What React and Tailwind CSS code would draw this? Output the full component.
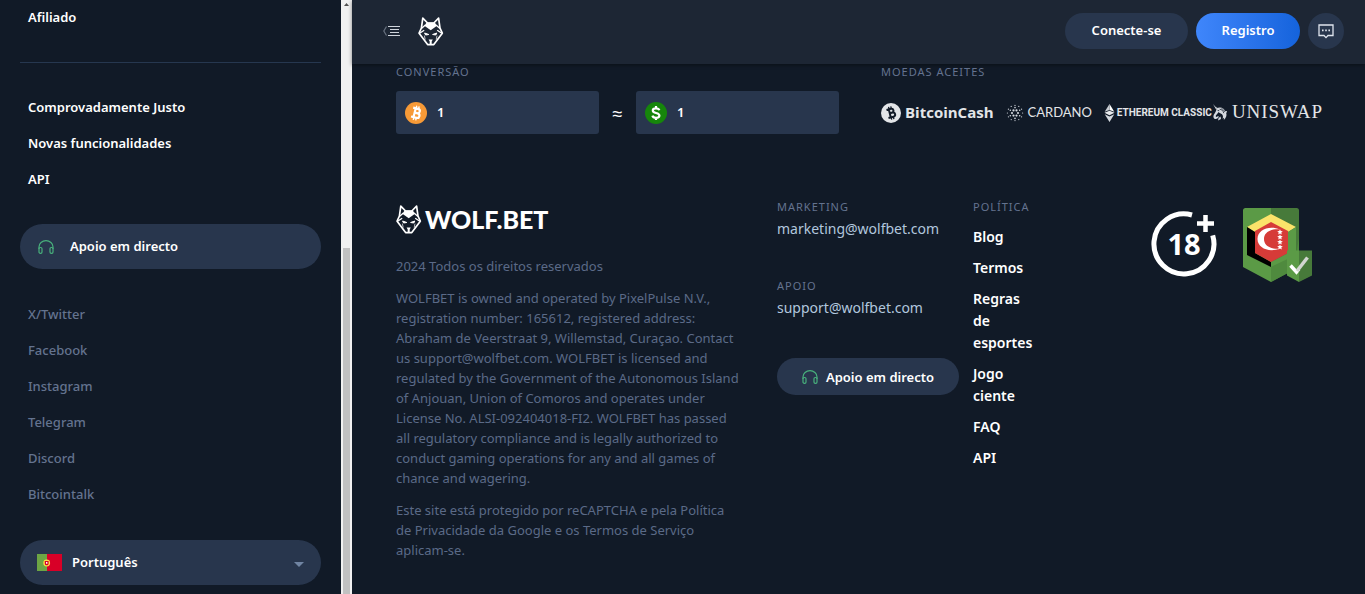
import React, { useState } from 'react';

const mainLinks = ['Comprovadamente Justo', 'Novas funcionalidades', 'API'];
const socialLinks = ['X/Twitter', 'Facebook', 'Instagram', 'Telegram', 'Discord', 'Bitcointalk'];
const policyLinks = ['Blog', 'Termos', 'Regras de esportes', 'Jogo ciente', 'FAQ', 'API'];

const WolfIcon = ({ className }) => (
  <svg viewBox="0 0 26 29" className={className} fill="none" stroke="#fff" strokeLinejoin="round" aria-hidden="true">
    <path d="M4.8 1.2 3.4 11 1.1 16.200 9.6 27.600h6.200l8.500-11.400L22 11 20.600 1.200 15.800 6H9.600Z" strokeWidth="1.7" />
    <path d="M8.600 5.600h8.200l2.200 3.200-6.300 4.400L6.400 8.800Z" fill="#fff" stroke="none" />
    <path d="M3.400 11.600 7.400 8M22 11.600 18 8M1.600 16.200l4.600-3M23.800 16.200l-4.600-3" strokeWidth="1.3" />
    <path d="m6.600 16 4.200 1.500-3.200.5ZM18.800 16l-4.200 1.500 3.200.5Z" fill="#fff" />
    <path d="M10.600 22.600h4.200l-1.100 1.800v3h-2v-3Z" fill="#fff" stroke="none" />
    <path d="m6.400 18.600.8 4M19 18.600l-.8 4" strokeWidth=".7" />
  </svg>
);

const HeadphonesIcon = () => (
  <svg viewBox="0 0 16 14" className="h-3.5 w-4 shrink-0" fill="none" stroke="#48b07c" strokeWidth="1.2" aria-hidden="true">
    <path d="M1 9V7a7 6.3 0 0 1 14 0v2" />
    <rect x="1" y="7.5" width="3" height="5.8" rx="1.3" />
    <rect x="12" y="7.5" width="3" height="5.8" rx="1.3" />
  </svg>
);

const MenuIcon = () => (
  <svg viewBox="0 0 17 12" className="h-3 w-[17px]" fill="none" aria-hidden="true">
    <path d="M3.500 1.500.8 6l2.700 4.500" stroke="#68717f" strokeWidth="1.2" />
    <path d="M5 1.500h12M7 4.500h9M7 7.500h9M5 10.500h12" stroke="#cfd4db" strokeWidth="1" />
  </svg>
);

const ChatIcon = () => (
  <svg viewBox="0 0 16 15" className="h-[15px] w-4" fill="none" stroke="#dfe5ee" strokeWidth="1.3" aria-hidden="true">
    <path d="M1 1h14v10.500h-5L8 13.600 6 11.500H1Z" />
    <path d="M4 6.400h1.600M7.200 6.400h1.600M10.400 6.400H12" strokeWidth="1.6" />
  </svg>
);

const BitcoinGlyph = ({ color }) => (
  <g fill="none" stroke={color} strokeWidth="2.2">
    <path d="M8.500 6.500h3.600a2.200 2.200 0 0 1 0 4.400H9.300M9.300 10.900h3.400a2.300 2.300 0 0 1 0 4.700H8.200M9.600 6.500v9M7 6.500h3M7 15.600h3" />
    <path d="M10 3.800v2.700M12.500 3.800v2.700M10 15.600v2.700M12.500 15.600v2.700" strokeWidth="1.4" />
  </g>
);

const BitcoinIcon = () => (
  <svg viewBox="0 0 22 22" className="h-[22px] w-[22px] shrink-0" aria-hidden="true">
    <circle cx="11" cy="11" r="11" fill="#f79a37" />
    <g transform="rotate(14 11 11)">
      <BitcoinGlyph color="#fff" />
    </g>
  </svg>
);

const DollarIcon = () => (
  <svg viewBox="0 0 22 22" className="h-[22px] w-[22px] shrink-0" aria-hidden="true">
    <circle cx="11" cy="11" r="11" fill="#16860b" />
    <path d="M14.300 8.200C13.900 6.900 12.700 6.300 11 6.300c-1.900 0-3.200.8-3.200 2.200 0 3.400 6.600 1.500 6.600 5 0 1.500-1.400 2.300-3.400 2.300-1.800 0-3.200-.7-3.600-2.200M11 4v2.300M11 15.800V18" fill="none" stroke="#fff" strokeWidth="2.2" />
  </svg>
);

const BitcoinCashIcon = () => (
  <svg viewBox="0 0 22 22" className="h-5 w-5" aria-hidden="true">
    <circle cx="11" cy="11" r="11" fill="#e3e5e8" />
    <g transform="rotate(-14 11 11)">
      <BitcoinGlyph color="#111a27" />
    </g>
  </svg>
);

const CardanoIcon = () => {
  const rings = [
    { r: 3, size: 1.1, step: 60, shift: 0 },
    { r: 5.4, size: 0.8, step: 60, shift: 30 },
    { r: 7.6, size: 0.6, step: 30, shift: 0 },
  ];
  return (
    <svg viewBox="-9 -9 18 18" className="h-[18px] w-[18px]" fill="#d5d9df" aria-hidden="true">
      {rings.map(({ r, size, step, shift }) =>
        Array.from({ length: 360 / step }, (_, i) => {
          const a = ((i * step + shift) * Math.PI) / 180;
          return <circle key={`${r}-${i}`} cx={r * Math.cos(a)} cy={r * Math.sin(a)} r={size} />;
        })
      )}
    </svg>
  );
};

const EthereumClassicIcon = () => (
  <svg viewBox="0 0 11 18" className="h-[18px] w-[11px]" aria-hidden="true">
    <path d="M5.500 0 10.300 7.800 5.500 6Z" fill="#fff" />
    <path d="M5.500 0 .7 7.800 5.500 6Z" fill="#c9cdd3" />
    <path d="m5.500 6.800 5 2-5 2.500-5-2.500Z" fill="#e8eaed" />
    <path d="M.7 10.200 5.500 12.600l4.800-2.400-4.800 7.800Z" fill="#d5d9df" />
  </svg>
);

const UniswapIcon = () => (
  <svg viewBox="0 0 16 17" className="h-[17px] w-4" fill="#d5d9df" aria-hidden="true">
    <path d="M1 0l4 4.600-.9.900ZM3.600 2.400 6 4.200l-.6.600Z" />
    <path d="M4.600 4.400C7 3.200 9.600 3.300 11.400 4.800c.9.800 1.400 1.700 2 2.500l1.600-.3c0 1-.3 1.600-.8 2 .9 2.600-.3 5.300-2.400 7l.2-2.200-1.500 1c.8-1.800.6-3.300-.5-4.500-1-1-2.600-1.300-3.500-2.300C6 9.400 4.600 10.400 3.900 11.600c-.4.900.1 1.500.9 1.200l1.500-.9.500 1-1.500 1.700c-1.700 1-4 0-3.900-2.200C1.500 10 4 8.500 4.600 4.400Z" />
    <path d="M7.600 5.200c2.200.2 3.600 1.600 4.200 4M5.600 6.400l1.600.3M9.500 4.600c1.600.6 2.600 1.800 3.200 3.200" stroke="#111a27" strokeWidth=".8" fill="none" />
    <path d="m6.600 14 2-1.500.4 2.500-3 1.500Z" />
  </svg>
);

const AgeBadge = () => (
  <svg viewBox="0 0 66 70" className="h-[70px] w-[66px]" role="img" aria-label="18+">
    <path d="M41 7A30 30 0 1 0 61.700 27.400" fill="none" stroke="#fff" strokeWidth="5" />
    <path d="M54.500 7v17M46 15.500h17" stroke="#fff" strokeWidth="4.500" />
    <text x="33" y="47" textAnchor="middle" fill="#fff" fontSize="29" fontWeight="700" fontFamily="Open Sans, sans-serif">
      18
    </text>
  </svg>
);

const LicenseBadge = () => (
  <svg viewBox="0 0 70 76" className="h-[76px] w-[70px]" role="img" aria-label="Anjouan Gaming">
    <path d="M2.500 0H28v74L0 59V2.500A2.500 2.500 0 0 1 2.500 0Z" fill="#5b9a46" />
    <path d="M28 0h25.500A2.500 2.500 0 0 1 56 2.500V59L28 74Z" fill="#477a3a" />
    <path d="M56 30v29L28 74V59l25-13Z" fill="#4f8a3e" />
    <path d="M4 19 28 6l25 13-8 5-17-9-16 9Z" fill="#fbe36a" />
    <path d="M4 19l8 5v21l16 9v5L4 47Z" fill="#000" />
    <path d="m45 24 8-5v28L28 59v-5l17-9Z" fill="#5b9a46" />
    <path d="m28 14 17 9v22l-17 9-16-9V23Z" fill="#d63b38" />
    <path d="M37 21.500C26 17 14.500 22 14.500 31S26 45 37 40.500c-8 1-16-2-16-9.500s8-10.500 16-9.500Z" fill="#fff" />
    {[24, 29, 34, 39].map((y) => (
      <path key={y} transform={`translate(37 ${y})`} d="m0-2.700.8 1.700 2 .2-1.500 1.200.5 2L0 1.400l-1.800 1 .5-2-1.500-1.200 2-.2Z" fill="#fff" />
    ))}
    <path d="M44 42.500h12V74L44 67.500Z" fill="#5b9a46" />
    <path d="M56 42.500h13v25L56 74Z" fill="#477a3a" />
    <path d="m47.500 57.500 6 6.500L56 61" fill="none" stroke="#fff" strokeWidth="3.5" />
    <path d="m54 63 10.500-13.500" fill="none" stroke="#d2d6d0" strokeWidth="3.5" />
  </svg>
);

const FlagPortugal = () => (
  <svg viewBox="0 0 25 17" className="h-[17px] w-[25px] shrink-0" aria-hidden="true">
    <path d="M0 0h10v17H0Z" fill="#6da544" />
    <path d="M10 0h15v17H10Z" fill="#d80027" />
    <circle cx="9.700" cy="9" r="3.4" fill="#ffda44" />
    <path d="M7.800 7h3.800v2.400a1.900 1.900 0 0 1-3.800 0Z" fill="#d80027" />
    <path d="M9 8h1.400v1.700H9Z" fill="#fff" />
  </svg>
);

const Label = ({ children }) => (
  <h3 className="text-[11px] leading-4 font-normal tracking-[1px] text-[#64738f] uppercase">{children}</h3>
);

const CurrencyInput = ({ icon, label, value, onChange }) => (
  <label className="flex h-[43px] min-w-0 flex-1 items-center gap-2.5 rounded-[3px] bg-[#28364d] px-[9px]">
    {icon}
    <input
      type="text"
      aria-label={label}
      value={value}
      onChange={(e) => onChange(e.target.value)}
      className="w-full min-w-0 bg-transparent text-[13px] font-semibold text-white outline-none"
    />
  </label>
);

const Sidebar = () => (
  <aside className="w-[341px] shrink-0 px-5 pb-[9px] text-[13px]">
    <div className="px-2 pt-[7px] leading-5">
      <a href="#afiliado" className="font-semibold text-white">Afiliado</a>
    </div>
    <hr className="mt-[35px] border-[#26374f]" />
    <nav className="mt-[27px] px-2">
      {mainLinks.map((item) => (
        <a key={item} href="#menu" className="flex h-9 items-center font-semibold text-white">
          {item}
        </a>
      ))}
    </nav>
    <button type="button" className="mt-[26px] flex h-[45px] w-full items-center gap-4 rounded-full bg-[#28364d] px-[18px] font-semibold text-white">
      <HeadphonesIcon />
      Apoio em directo
    </button>
    <nav className="mt-7 px-2">
      {socialLinks.map((item) => (
        <a key={item} href="#social" className="flex h-9 items-center font-medium text-[#64738f]">
          {item}
        </a>
      ))}
    </nav>
    <label className="mt-[27px] flex h-[45px] items-center gap-2.5 rounded-full bg-[#28364d] px-[17px]">
      <FlagPortugal />
      <select aria-label="Idioma" className="min-w-0 flex-1 appearance-none bg-transparent font-semibold text-white outline-none">
        <option>Português</option>
      </select>
      <svg viewBox="0 0 10 5" className="mt-1 h-[5px] w-2.5" aria-hidden="true">
        <path d="M0 0h10L5 5Z" fill="#7185a3" />
      </svg>
    </label>
  </aside>
);

const ScrollTrack = () => (
  <div className="flex w-[11px] shrink-0 flex-col bg-[#f1f1f1] px-0.5" aria-hidden="true">
    <svg viewBox="0 0 7 8" className="h-2 w-[7px]">
      <path d="M1 6h5L3.500 3Z" fill="#505050" />
    </svg>
    <div className="mt-60 flex-1 bg-[#c1c1c1]" />
  </div>
);

const Header = () => (
  <header className="relative flex h-16 items-center bg-[#1d2634] pr-[21px] pb-0.5 pl-[31px] shadow-[0_1px_4px_rgba(0,0,0,0.45)]">
    <button type="button" aria-label="Menu">
      <MenuIcon />
    </button>
    <a href="#home" aria-label="Wolf.bet" className="ml-[18px]">
      <WolfIcon className="h-[29px] w-[26px]" />
    </a>
    <div className="ml-auto flex items-center gap-2 text-[13px] font-semibold text-white">
      <button type="button" className="h-9 w-[123px] rounded-full bg-[#28364d]">Conecte-se</button>
      <button type="button" className="h-9 w-[104px] rounded-full bg-linear-to-r from-[#3f86fb] to-[#1463dc]">Registro</button>
      <button type="button" aria-label="Chat" className="flex h-9 w-9 items-center justify-center rounded-full bg-[#28364d]">
        <ChatIcon />
      </button>
    </div>
  </header>
);

const Conversion = () => {
  const [btc, setBtc] = useState('1');
  const [usd, setUsd] = useState('1');

  return (
    <section className="grid grid-cols-[443fr_442fr] gap-[42px]">
      <div className="min-w-0">
        <Label>Conversão</Label>
        <div className="mt-[11px] flex items-center">
          <CurrencyInput icon={<BitcoinIcon />} label="Bitcoin" value={btc} onChange={setBtc} />
          <span className="w-[37px] text-center text-lg text-white">≈</span>
          <CurrencyInput icon={<DollarIcon />} label="Dólar" value={usd} onChange={setUsd} />
        </div>
      </div>
      <div className="min-w-0">
        <Label>Moedas aceites</Label>
        <div className="mt-[11px] flex h-[43px] items-center justify-between whitespace-nowrap text-[#e3e5e8]">
          <span className="flex items-center gap-1 font-['Open_Sans',sans-serif] text-[15px] font-bold">
            <BitcoinCashIcon />
            BitcoinCash
          </span>
          <span className="flex items-center gap-1 font-[Lato,sans-serif] text-[13px]">
            <CardanoIcon />
            CARDANO
          </span>
          <span className="flex items-center">
            <span className="flex items-center gap-0.5 font-[Roboto,sans-serif] text-[10px] font-bold">
              <EthereumClassicIcon />
              ETHEREUM CLASSIC
            </span>
            <span className="flex items-center gap-1 font-['Liberation_Serif',serif] text-[19px] tracking-wider">
              <UniswapIcon />
              UNISWAP
            </span>
          </span>
        </div>
      </div>
    </section>
  );
};

const Footer = () => (
  <footer className="mt-[65px] grid grid-cols-[381fr_196fr_178fr_172fr]">
    <div className="max-w-[347px]">
      <a href="#home" className="mt-1.5 flex items-center gap-[3px] text-white">
        <WolfIcon className="h-[29px] w-[26px]" />
        <span className="font-[Lato,sans-serif] text-[25px] leading-[29px] font-black">WOLF.BET</span>
      </a>
      <div className="mt-[22px] space-y-3 text-[13px] leading-5 text-[#5b6a87]">
        <p>2024 Todos os direitos reservados</p>
        <p>
          WOLFBET is owned and operated by PixelPulse N.V., registration number: 165612, registered address: Abraham de
          Veerstraat 9, Willemstad, Curaçao. Contact us support@wolfbet.com. WOLFBET is licensed and regulated by the
          Government of the Autonomous Island of Anjouan, Union of Comoros and operates under License No.
          ALSI-092404018-FI2. WOLFBET has passed all regulatory compliance and is legally authorized to conduct gaming
          operations for any and all games of chance and wagering.
        </p>
        <p>
          Este site está protegido por reCAPTCHA e pela Política de Privacidade da Google e os Termos de Serviço
          aplicam-se.
        </p>
      </div>
    </div>

    <div className="text-sm leading-5 text-[#b1c7de]">
      <Label>Marketing</Label>
      <a href="mailto:marketing@wolfbet.com" className="mt-1 block">marketing@wolfbet.com</a>
      <div className="mt-[39px]">
        <Label>Apoio</Label>
      </div>
      <a href="mailto:support@wolfbet.com" className="mt-1 block">support@wolfbet.com</a>
      <button type="button" className="mt-10 flex h-[37px] w-[182px] items-center justify-center gap-2 rounded-full bg-[#28364d] text-[13px] font-semibold whitespace-nowrap text-white">
        <HeadphonesIcon />
        Apoio em directo
      </button>
    </div>

    <div className="max-w-[66px]">
      <Label>Política</Label>
      <ul className="mt-[11px] space-y-[9px] text-sm leading-[22px] font-semibold text-white">
        {policyLinks.map((item) => (
          <li key={item}>
            <a href="#politica">{item}</a>
          </li>
        ))}
      </ul>
    </div>

    <div className="flex items-start gap-[26px] pt-[9px]">
      <AgeBadge />
      <LicenseBadge />
    </div>
  </footer>
);

const App = () => (
  <div className="flex h-screen overflow-hidden bg-[#111a27] font-['Noto_Sans',sans-serif]">
    <Sidebar />
    <ScrollTrack />
    <div className="min-w-0 flex-1">
      <Header />
      <main className="pr-[42px] pl-11">
        <Conversion />
        <Footer />
      </main>
    </div>
  </div>
);

export default App;
